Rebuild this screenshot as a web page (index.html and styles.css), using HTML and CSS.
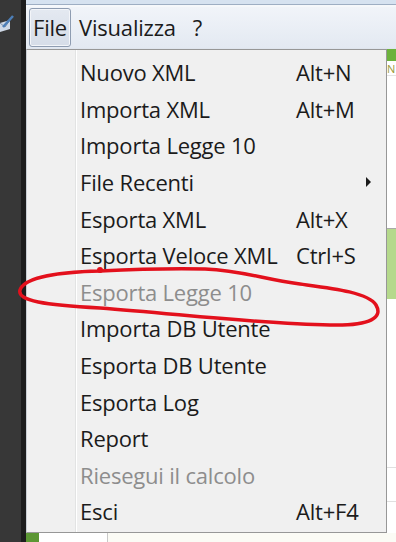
FILE: index.html
```html
<!DOCTYPE html>
<html lang="it">
<head>
    <meta charset="UTF-8">
    <title>File menu</title>
    <link rel="stylesheet" href="styles.css">
</head>
<body>
    <div class="side">
        <svg class="side-icon" width="14" height="20" viewBox="0 0 14 20">
            <path d="M0 9 L10 6 L10 15 L0 18 Z" fill="#cfd9e6"/>
            <path d="M0 9 L5 13 L10 6" fill="none" stroke="#7d8da3" stroke-width="1"/>
            <path d="M3 13 L13 2" stroke="#4d7fb8" stroke-width="2.5"/>
        </svg>
    </div>

    <div class="app">
        <div class="titlestrip"></div>

        <div class="menubar">
            <span class="menu-title active">File</span>
            <span class="menu-title">Visualizza</span>
            <span class="menu-title">?</span>
        </div>

        <div class="work">
            <div class="popup">
                <div class="gutter"></div>
                <ul class="items">
                    <li class="item"><span>Nuovo XML</span><span>Alt+N</span></li>
                    <li class="item"><span>Importa XML</span><span>Alt+M</span></li>
                    <li class="item"><span>Importa Legge 10</span><span></span></li>
                    <li class="item"><span>File Recenti</span><span></span><span class="arrow"></span></li>
                    <li class="item"><span>Esporta XML</span><span>Alt+X</span></li>
                    <li class="item"><span>Esporta Veloce XML</span><span>Ctrl+S</span></li>
                    <li class="item disabled"><span>Esporta Legge 10</span><span></span></li>
                    <li class="item"><span>Importa DB Utente</span><span></span></li>
                    <li class="item"><span>Esporta DB Utente</span><span></span></li>
                    <li class="item"><span>Esporta Log</span><span></span></li>
                    <li class="item"><span>Report</span><span></span></li>
                    <li class="item disabled"><span>Riesegui il calcolo</span><span></span></li>
                    <li class="item"><span>Esci</span><span>Alt+F4</span></li>
                </ul>
            </div>

            <div class="behind">
                <div class="behind-head"></div>
                <div class="behind-row">N</div>
                <div class="behind-gap"></div>
                <div class="behind-green"></div>
                <div class="behind-rest"></div>
            </div>
        </div>

        <div class="bottom">
            <div class="bottom-green"></div>
            <div class="bottom-cell"></div>
            <div class="bottom-cell wide"></div>
        </div>
    </div>

    <!-- red marker drawn over the screenshot -->
    <svg class="scribble" width="396" height="542" viewBox="0 0 396 542">
        <path d="M205 269 C160 268 120 270 100 271 C60 272 24 277 20 290 C17 301 45 305 100 308 C180 314 260 324 330 325 C372 326 383 317 376 305 C368 292 330 288 300 284 C262 279 245 271 205 269"
              fill="none" stroke="#e3101c" stroke-width="3.5" stroke-linecap="round"/>
        <circle cx="100" cy="270" r="3" fill="#e3101c"/>
    </svg>
</body>
</html>
```

FILE: styles.css
```css
* {
    box-sizing: border-box;
}

body {
    margin: 0;
    width: 396px;
    height: 542px;
    overflow: hidden;
    display: flex;
    font-family: "Open Sans", "Noto Sans", sans-serif;
    font-size: 22px;
    color: #1b1b1b;
    background: #fbfbf5;
    position: relative;
}

.side {
    width: 26px;
    flex: none;
    background: #373737;
    border-right: 5px solid #1d1d1d;
    padding-top: 14px;
}

.side-icon {
    display: block;
}

.app {
    flex: 1;
    display: flex;
    flex-direction: column;
    min-width: 0;
}

.titlestrip {
    height: 7px;
    background: linear-gradient(#d6e2f0 0, #d6e2f0 4px, #9eaec3 4px, #9eaec3 5px, #f6f8fb 5px);
}

.menubar {
    height: 42px;
    display: flex;
    align-items: center;
    gap: 4px;
    padding-left: 3px;
    background: linear-gradient(#f1f4f9, #e3e9f2);
    border-bottom: 1px solid #dfe5ee;
}

.menu-title {
    line-height: 37px;
    padding: 0 3px;
    border: 1px solid transparent;
    letter-spacing: -0.2px;
}

.menu-title:last-child {
    margin-left: 5px;
}

.menu-title.active {
    background: linear-gradient(#e4e9f1, #d6dde8);
    border-color: #8e9cb1;
    border-radius: 3px;
    box-shadow: inset 0 0 0 1px #f3f5f9;
}

.work {
    flex: 1;
    display: flex;
}

.popup {
    width: 361px;
    flex: none;
    display: flex;
    background: #f0f0f0;
    border: 1px solid #979797;
    border-left-color: #c9ced4;
}

.gutter {
    width: 49px;
    flex: none;
    border-right: 1px solid #e2e3e3;
    box-shadow: 1px 0 0 #ffffff;
}

.items {
    list-style: none;
    margin: 0;
    padding: 4px 0 0 4px;
    flex: 1;
}

.item {
    height: 36.6px;
    display: grid;
    grid-template-columns: 216px 1fr 20px;
    align-items: center;
    white-space: nowrap;
    letter-spacing: -0.2px;
}

.item.disabled {
    color: #8d8d8d;
}

.arrow {
    width: 0;
    height: 0;
    border-top: 5px solid transparent;
    border-bottom: 5px solid transparent;
    border-left: 5px solid #1b1b1b;
    justify-self: start;
}

.behind {
    flex: 1;
    display: flex;
    flex-direction: column;
    background: #ffffff;
}

.behind-head {
    height: 12px;
    background: #6cb23c;
}

.behind-row {
    height: 15px;
    font-size: 11px;
    line-height: 15px;
    color: #9a9a3a;
    overflow: hidden;
    border-bottom: 1px solid #e4e4e4;
}

.behind-gap {
    height: 153px;
    border-bottom: 1px solid #a9a9a9;
}

.behind-green {
    height: 70px;
    background: #b5d98c;
}

.behind-rest {
    flex: 1;
    background: linear-gradient(#ffffff 0, #ffffff 168px, #e0e0e0 168px, #e0e0e0 169px, #ffffff 169px, #ffffff 202px, #e0e0e0 202px, #e0e0e0 203px, #ffffff 203px);
}

.bottom {
    height: 9px;
    flex: none;
    display: flex;
}

.bottom-green {
    width: 15px;
    background: #5c9734;
    border-right: 2px solid #ffffff;
}

.bottom-cell {
    width: 67px;
    background: #ffffff;
    border-right: 1px solid #c9c9c9;
}

.bottom-cell.wide {
    flex: 1;
    background: #fbfbf5;
    border-right: 0;
}

.scribble {
    position: absolute;
    left: 0;
    top: 0;
    pointer-events: none;
}
```
